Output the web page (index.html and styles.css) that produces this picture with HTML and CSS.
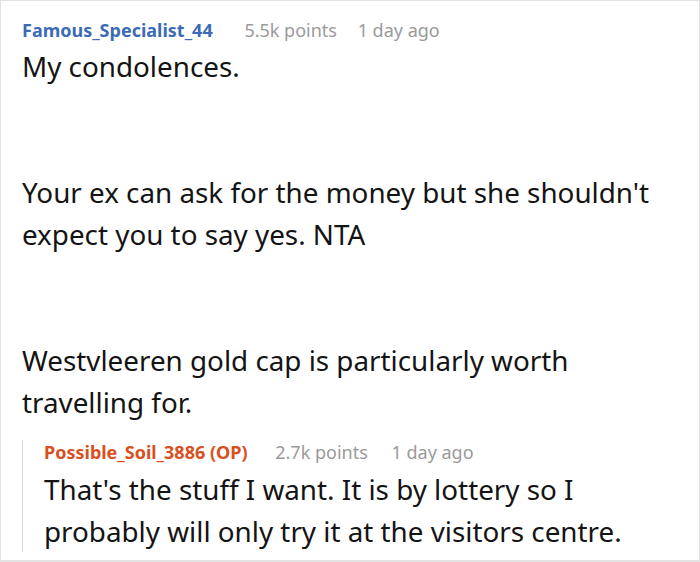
FILE: index.html
```html
<!DOCTYPE html>
<html lang="en">
<head>
<meta charset="utf-8">
<title>Comment</title>
<link rel="stylesheet" href="styles.css">
</head>
<body>
<div class="frame">
  <div class="comment">
    <div class="meta">
      <span class="user user-blue">Famous_Specialist_44</span>
      <span class="points">5.5k points</span>
      <span class="time">1 day ago</span>
    </div>
    <div class="body">
      <p>My condolences.</p>
      <p>Your ex can ask for the money but she shouldn't expect you to say yes. NTA</p>
      <p>Westvleeren gold cap is particularly worth travelling for.</p>
    </div>
    <div class="reply">
      <div class="meta meta-reply">
        <span class="user user-op">Possible_Soil_3886 (OP)</span>
        <span class="points">2.7k points</span>
        <span class="time">1 day ago</span>
      </div>
      <div class="body body-reply">
        <p>That's the stuff I want. It is by lottery so I probably will only try it at the visitors centre.</p>
      </div>
    </div>
  </div>
</div>
</body>
</html>
```
FILE: styles.css
```css
html, body {
  margin: 0;
  padding: 0;
  background: #ffffff;
}
.frame {
  width: 700px;
  height: 562px;
  box-sizing: border-box;
  border: 1px solid #e3e3e3;
  border-bottom-width: 2px;
  overflow: hidden;
  font-family: "Noto Sans", "Open Sans", sans-serif;
}
.comment {
  padding: 17px 30px 0 21px;
}
.meta {
  font-size: 18px;
  line-height: 24px;
  white-space: nowrap;
}
.user {
  font-weight: 700;
  margin-right: 27px;
}
.user-blue {
  color: #3c6bb6;
}
.user-op {
  color: #d9501f;
  margin-right: 23px;
}
.points {
  color: #9a9a9a;
  margin-right: 16px;
}
.meta-reply .points {
  margin-right: 19px;
}
.time {
  color: #9a9a9a;
}
.body {
  margin-top: 3px;
  font-size: 27.8px;
  line-height: 42px;
  color: #141414;
}
.body p {
  margin: 0 0 84px 0;
}
.body p:last-child {
  margin-bottom: 0;
}
.reply {
  margin-top: 26px;
  border-left: 1px solid #dcdcdc;
  padding-left: 21px;
}
.meta-reply {
  margin-top: -9px;
}
.body-reply {
  margin-top: 4px;
  margin-bottom: -13px;
}
```
